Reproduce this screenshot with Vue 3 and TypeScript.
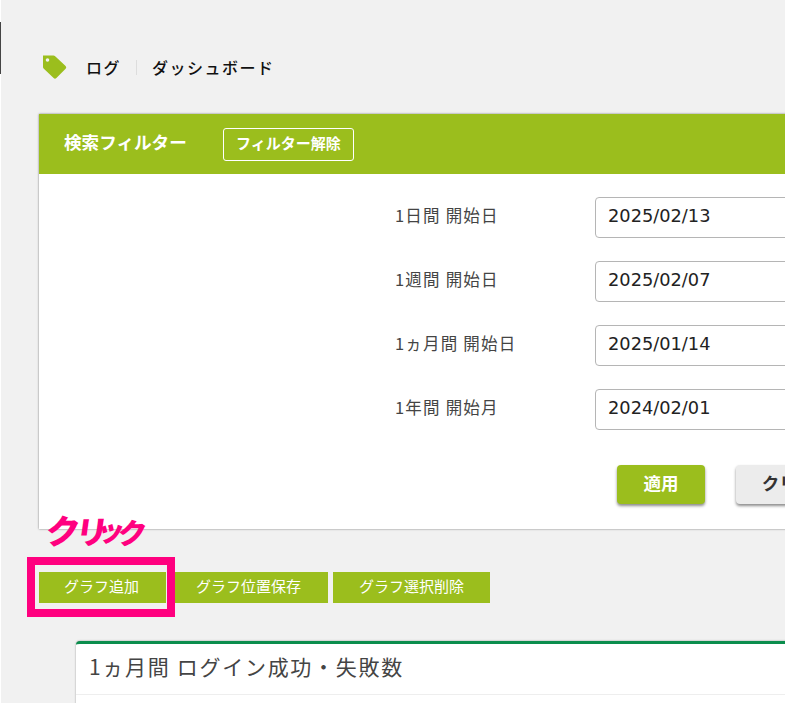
<script setup lang="ts">
const rows = [
  { label: '1日間 開始日', value: '2025/02/13' },
  { label: '1週間 開始日', value: '2025/02/07' },
  { label: '1ヵ月間 開始日', value: '2025/01/14' },
  { label: '1年間 開始月', value: '2024/02/01' },
]
</script>

<template>
  <div class="page">
    <div class="rail"><span class="rail-mark"></span></div>
    <main class="main">
      <header class="crumbs">
        <svg class="tag" width="26" height="26" viewBox="0 0 26 26">
          <path fill="#9bbe1d" fill-rule="evenodd" d="M2 1.5h10.5a2 2 0 0 1 1.4.6L24.6 12a2 2 0 0 1 0 2.8L15.4 24a2 2 0 0 1-2.8 0L2.600 14.500A2 2 0 0 1 2 13V1.500ZM6.500 4.200a1.800 1.800 0 1 0 0 3.600 1.800 1.800 0 0 0 0-3.600Z"/>
        </svg>
        <span class="crumb">ログ</span>
        <span class="crumb-sep"></span>
        <span class="crumb">ダッシュボード</span>
      </header>

      <section class="filter">
        <div class="filter-head">
          <h2 class="filter-title">検索フィルター</h2>
          <button class="clear-filter">フィルター解除</button>
        </div>
        <div class="filter-body">
          <div v-for="row in rows" :key="row.label" class="row">
            <span class="row-label">{{ row.label }}</span>
            <div class="field">{{ row.value }}</div>
          </div>
          <div class="actions">
            <button class="act act-apply">適用</button>
            <button class="act act-clear">クリア</button>
          </div>
        </div>
      </section>

      <div class="note"><span class="n1">ク</span><span class="n2">リ</span><span class="n3">ッ</span><span class="n4">ク</span></div>

      <div class="graph-actions">
        <div class="highlight"><button class="graph-btn first">グラフ追加</button></div>
        <button class="graph-btn second">グラフ位置保存</button>
        <button class="graph-btn third">グラフ選択削除</button>
      </div>

      <section class="chart">
        <h3 class="chart-title">1ヵ月間 ログイン成功・失敗数</h3>
      </section>
    </main>
  </div>
</template>

<style>
html, body { margin: 0; padding: 0; overflow: hidden; background: #f1f1f1; }
</style>

<style scoped>
.page {
  display: flex;
  width: 785px;
  height: 703px;
  overflow: hidden;
  background: #f1f1f1;
  font-family: "Noto Sans CJK JP", "Liberation Sans", sans-serif;
}
.rail { flex: 0 0 1px; background: #fff; padding-top: 22px; }
.rail-mark { display: block; width: 1px; height: 52px; background: #444; }
.main { flex: 0 0 auto; width: 900px; }
.crumbs { display: flex; align-items: center; height: 26px; margin: 54px 0 0 40px; }
.tag { margin-right: 19px; }
.crumb { font-size: 16px; letter-spacing: 1.500px; font-weight: 500; color: #111; line-height: 26px; }
.crumb-sep { width: 1px; height: 15px; background: #ddd; margin: 0 15px 0 15px; }
.filter {
  margin: 34px 0 0 38px;
  width: 860px;
  background: #fff;
  box-shadow: 0 0 2px rgba(0, 0, 0, .5);
}
.filter-head {
  display: flex;
  align-items: center;
  height: 60px;
  padding-left: 25px;
  background: #9bbe1d;
}
.filter-title { margin: -4px 36px 0 0; font-size: 17.600px; font-weight: 700; color: #fff; line-height: 56px; }
.clear-filter {
  height: 33px;
  width: 131px;
  padding: 0 0 3px;
  border: 1px solid #fff;
  border-radius: 3px;
  background: transparent;
  color: #fff;
  font: 700 15px "Noto Sans CJK JP", sans-serif;
}
.filter-body { height: 355px; padding-top: 23px; box-sizing: border-box; }
.row { display: flex; align-items: center; height: 40px; margin-bottom: 24px; }
.row-label { width: 200px; margin-left: 356px; margin-top: -4px; font-size: 16.500px; letter-spacing: 1.200px; color: #444; }
.field {
  box-sizing: border-box;
  width: 300px;
  height: 41px;
  padding: 0 12px;
  border: 1px solid #b5b5b5;
  border-radius: 4px;
  background: #fff;
  color: #222;
  font: 17.800px/36px "DejaVu Sans", sans-serif;
}
.actions { display: flex; gap: 31px; margin: 36px 0 0 578px; }
.act {
  width: 88px;
  height: 39px;
  padding: 0 0 5px;
  border: 0;
  border-radius: 4px;
  font: 700 17.500px "Noto Sans CJK JP", sans-serif;
  box-shadow: 0 2px 3px rgba(0, 0, 0, .45);
}
.act-apply { background: #9bbe1d; color: #fff; }
.act-clear { width: 104px; background: #ececec; color: #333; }
.note {
  position: absolute;
  left: 46px;
  top: 506px;
  display: flex;
  align-items: baseline;
  color: #ff007f;
  font: 900 34px/48px "Noto Sans CJK JP", sans-serif;
  transform: skewX(-8deg);
}
.n1 { font-size: 34px; margin-right: -4px; }
.n2 { font-size: 32px; margin-right: -11px; }
.n3 { font-size: 28px; margin-right: -7px; transform: translateY(-3px); }
.n4 { font-size: 29px; }
.graph-actions { display: flex; align-items: center; margin: 28px 0 0 26px; }
.highlight {
  box-sizing: border-box;
  width: 148px;
  height: 60px;
  border: 8px solid #ff007f;
  display: flex;
  align-items: center;
  padding: 0 0 0 4px;
}
.graph-btn {
  height: 31px;
  padding: 0 0 3px;
  border: 0;
  background: #9bbe1d;
  color: #fff;
  font: 400 15px "Noto Sans CJK JP", sans-serif;
}
.first { width: 127px; padding-right: 2px; }
.second { width: 153px; margin-right: 5px; padding-right: 6px; }
.third { width: 157px; }
.chart {
  margin: 24px 0 0 75px;
  height: 200px;
  background: #fff;
  border-top: 3px solid #0b8d4d;
  border-radius: 4px 0 0 0;
  box-shadow: 0 0 2px rgba(0, 0, 0, .4);
}
.chart-title {
  margin: 0;
  height: 50px;
  padding-left: 13px;
  border-bottom: 1px solid #eee;
  font-size: 21px;
  letter-spacing: 1.700px;
  font-weight: 400;
  line-height: 44px;
  color: #444;
}
</style>
